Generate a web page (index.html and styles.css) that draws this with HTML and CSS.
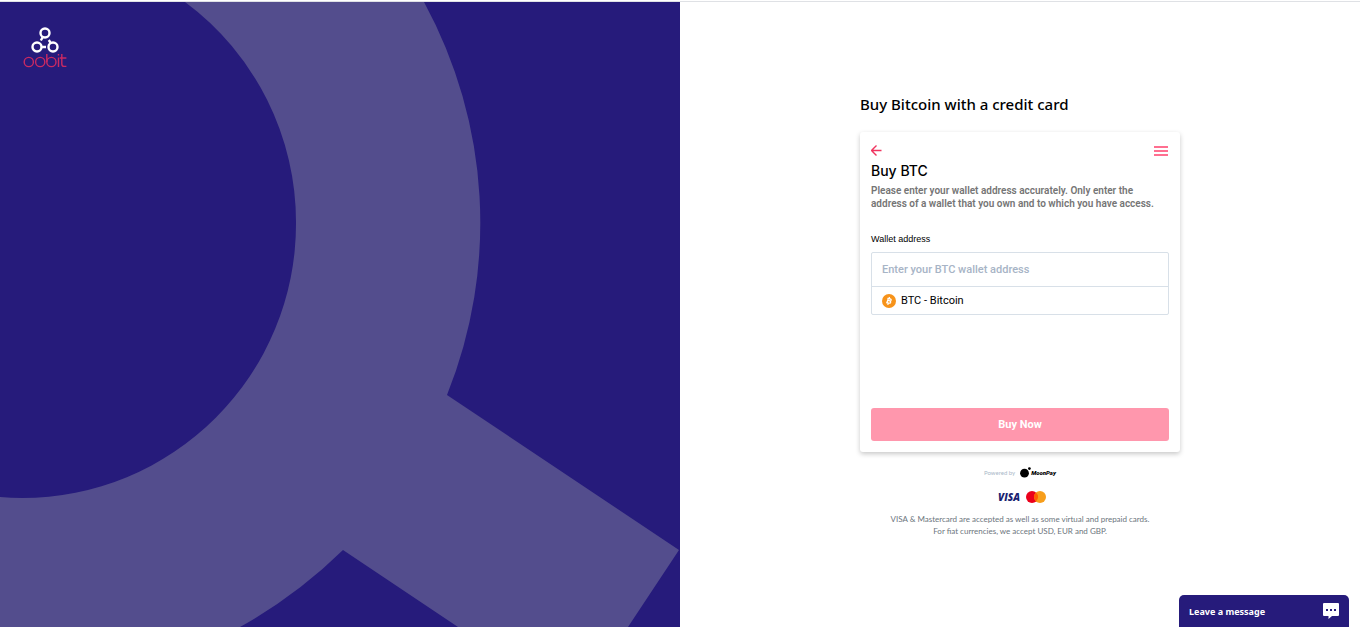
FILE: index.html
```
<!DOCTYPE html>
<html lang="en">
<head>
  <meta charset="UTF-8">
  <meta name="viewport" content="width=device-width, initial-scale=1">
  <title>Oobit - Buy Bitcoin</title>
  <link rel="stylesheet" href="styles.css">
</head>
<body>
  <div class="page">
    <aside class="brand">
      <svg class="brand-bg" viewBox="0 0 680 625" preserveAspectRatio="xMinYMin slice" aria-hidden="true">
        <path d="M185 0H424A484 472 0 0 1 447 393L679 548L628 625H458L343 548A484 472 0 0 1 240 625H0V495Q11 496 22 496A274 274 0 0 0 296 222A274 274 0 0 0 185 0Z" fill="#534d8d"/>
      </svg>
      <a class="logo" href="#" aria-label="oobit">
        <svg class="logo-mark" viewBox="0 0 30 27" aria-hidden="true">
          <g fill="none" stroke="#fff" stroke-width="2.4">
            <circle cx="15" cy="6" r="4.5"/>
            <circle cx="7" cy="20" r="4.5"/>
            <circle cx="23" cy="20" r="4.5"/>
            <path d="M12.6 10.4L10.8 13.5M18.8 13L20.6 15.8M12 20H16"/>
          </g>
        </svg>
        <svg class="logo-word" viewBox="0 0 44 15" aria-hidden="true">
          <g fill="none" stroke="#c92a63" stroke-width="1.4">
            <circle cx="5.8" cy="8" r="4.6"/>
            <circle cx="17.2" cy="8" r="4.6"/>
            <path d="M23.8 0V8"/>
            <circle cx="28.4" cy="8" r="4.6"/>
            <path d="M35.5 3.5V13M35.5 0V1.6M38.8 0V10Q38.8 12.4 41 12.4H43.4M36.8 4H43.4"/>
          </g>
        </svg>
      </a>
    </aside>

    <main class="content">
      <div class="widget">
        <h1>Buy Bitcoin with a credit card</h1>

        <form class="card" onsubmit="event.preventDefault();">
          <div class="card-nav">
            <button type="button" class="icon-btn" aria-label="Back">
              <svg width="12" height="12" viewBox="0 0 12 12" fill="none" stroke="#f0345f" stroke-width="1.4"><path d="M10.5 5.5H1M5.5 .5L.5 5.5L5.5 10.5"/></svg>
            </button>
            <button type="button" class="icon-btn" aria-label="Menu">
              <svg width="14" height="10" viewBox="0 0 14 10" fill="#ff6f90"><path d="M0 0H14V2H0ZM0 4H14V6H0ZM0 8H14V10H0Z"/></svg>
            </button>
          </div>
          <h2>Buy BTC</h2>
          <p class="intro">Please enter your wallet address accurately. Only enter the address of a wallet that you own and to which you have access.</p>

          <label for="wallet">Wallet address</label>
          <div class="wallet-box">
            <input type="text" id="wallet" name="wallet" placeholder="Enter your BTC wallet address">
            <div class="coin">
              <svg width="14" height="14" viewBox="0 0 14 14" aria-hidden="true">
                <circle cx="7" cy="7" r="7" fill="#f7931a"/>
                <path d="M5.4 4.3L8 4.9Q9.5 5.3 9.1 6.2Q8.7 7 7.2 6.7L5.5 6.3M7.2 6.7Q9 7.3 8.6 8.4Q8.1 9.5 6.5 9.1L4.2 8.5M6.2 4.4L5 8.8M7.5 3L7.1 4.6M6.2 9.2L5.8 10.8" fill="none" stroke="#fff" stroke-width="1.3"/>
              </svg>
              <span>BTC - Bitcoin</span>
            </div>
          </div>

          <button type="submit" class="buy">Buy Now</button>
        </form>

        <div class="powered">
          <span>Powered by</span>
          <svg class="moon" width="11" height="11" viewBox="0 0 11 11" aria-hidden="true"><circle cx="4.5" cy="6.2" r="4.4"/><circle cx="9.4" cy="1.6" r="1.4"/></svg>
          <b>MoonPay</b>
        </div>
        <div class="cards">
          <span class="visa">VISA</span>
          <svg width="20" height="12" viewBox="0 0 20 12" role="img" aria-label="Mastercard">
            <circle cx="6" cy="6" r="6" fill="#eb001b"/>
            <circle cx="14" cy="6" r="6" fill="#f79e1b"/>
            <path d="M10 1.5A6 6 0 0 1 10 10.5A6 6 0 0 1 10 1.5Z" fill="#ff5f00"/>
          </svg>
        </div>
        <p class="note">VISA &amp; Mastercard are accepted as well as some virtual and prepaid cards.<br>For fiat currencies, we accept USD, EUR and GBP.</p>
      </div>
    </main>
  </div>

  <button type="button" class="chat">
    <span>Leave a message</span>
    <svg width="16" height="16" viewBox="0 0 16 16" aria-hidden="true">
      <path d="M1 0H15Q16 0 16 1V12Q16 13 15 13H9L5.5 16V13H1Q0 13 0 12V1Q0 0 1 0Z" fill="#fff"/>
      <path d="M3 6H5V8H3ZM7 6H9V8H7ZM11 6H13V8H11Z" fill="#261b7b"/>
    </svg>
  </button>
</body>
</html>
```
FILE: styles.css
```
* {
  box-sizing: border-box;
}

body {
  display: flex;
  flex-direction: column;
  min-height: 100vh;
  margin: 0;
  padding-top: 1px;
  font-family: "Noto Sans", "Open Sans", sans-serif;
  background: #fff;
  color: #000;
}

h1,
h2,
p {
  margin: 0;
}

button {
  border: none;
  cursor: pointer;
}

svg {
  display: block;
}

.page {
  flex: 1;
  display: flex;
  border-top: 1px solid #dfe1e5;
}

.brand {
  flex: 1;
  position: relative;
  overflow: hidden;
  background: #261b7b;
}

.brand-bg {
  position: absolute;
  width: 100%;
  height: 100%;
}

.logo {
  position: relative;
  display: inline-flex;
  flex-direction: column;
  align-items: center;
  padding: 25px 23px;
}

.logo-mark {
  width: 30px;
  height: 27px;
}

.logo-word {
  width: 44px;
  height: 15px;
}

.content {
  flex: 1;
  display: flex;
  flex-direction: column;
  align-items: center;
  justify-content: center;
}

.widget {
  width: 320px;
}

h1 {
  margin-bottom: 16px;
  font-size: 15px;
  font-weight: 500;
  line-height: 24px;
}

.card {
  display: flex;
  flex-direction: column;
  height: 320px;
  padding: 11px;
  border-radius: 3px;
  box-shadow: 0 2px 5px rgba(0, 0, 0, 0.22);
  font-family: Roboto, Arial, sans-serif;
}

.card-nav {
  display: flex;
  align-items: center;
  justify-content: space-between;
  height: 16px;
  padding-right: 1px;
}

.icon-btn {
  padding: 0;
  background: none;
}

h2 {
  margin-top: 3px;
  font-family: Inter, sans-serif;
  font-size: 14px;
  font-weight: 500;
  line-height: 18px;
}

.intro {
  margin-top: 4px;
  padding-right: 10px;
  color: #757575;
  font-size: 10px;
  font-weight: 600;
  line-height: 13px;
}

label {
  margin-top: 23px;
  font-family: "Liberation Sans", Arial, sans-serif;
  font-size: 9px;
  line-height: 12px;
}

.wallet-box {
  margin-top: 7px;
  border: 1px solid #d8e0e8;
  border-radius: 2px;
}

.wallet-box input {
  display: block;
  width: 100%;
  height: 34px;
  padding: 0 10px;
  border: none;
  border-bottom: 1px solid #d8e0e8;
  background: none;
  font-family: inherit;
  font-size: 11px;
  font-weight: 500;
}

.wallet-box input::placeholder {
  color: #a7b4c6;
}

.coin {
  display: flex;
  align-items: center;
  gap: 5px;
  height: 27px;
  padding: 0 10px;
  font-size: 11px;
}

.buy {
  height: 33px;
  margin-top: auto;
  border-radius: 3px;
  background: #ff97ad;
  color: #fff;
  font-family: inherit;
  font-size: 11px;
  font-weight: bold;
}

.powered {
  display: flex;
  align-items: center;
  justify-content: center;
  height: 12px;
  margin-top: 14px;
  color: #a9b8c8;
  font-family: Lato, sans-serif;
  font-size: 6px;
}

.powered .moon {
  margin-left: 5px;
}

.powered b {
  color: #000;
  font-family: Roboto, sans-serif;
  font-size: 6px;
  font-weight: 900;
  font-style: italic;
}

.cards {
  display: flex;
  align-items: center;
  justify-content: center;
  gap: 6px;
  height: 12px;
  margin-top: 13px;
  padding-left: 4px;
}

.visa {
  color: #1a1f71;
  font-family: "Open Sans", sans-serif;
  font-size: 10px;
  font-style: italic;
  font-weight: 800;
}

.note {
  margin-top: 10px;
  color: #6c757d;
  font-family: Lato, sans-serif;
  font-size: 8px;
  line-height: 12px;
  text-align: center;
}

.chat {
  position: fixed;
  right: 11px;
  bottom: 0;
  display: flex;
  align-items: center;
  justify-content: space-between;
  width: 170px;
  height: 32px;
  padding: 0 10px;
  border-radius: 5px 5px 0 0;
  background: #261b7b;
  color: #fff;
  font-family: "Noto Sans", sans-serif;
  font-size: 9px;
  font-weight: bold;
}
```
